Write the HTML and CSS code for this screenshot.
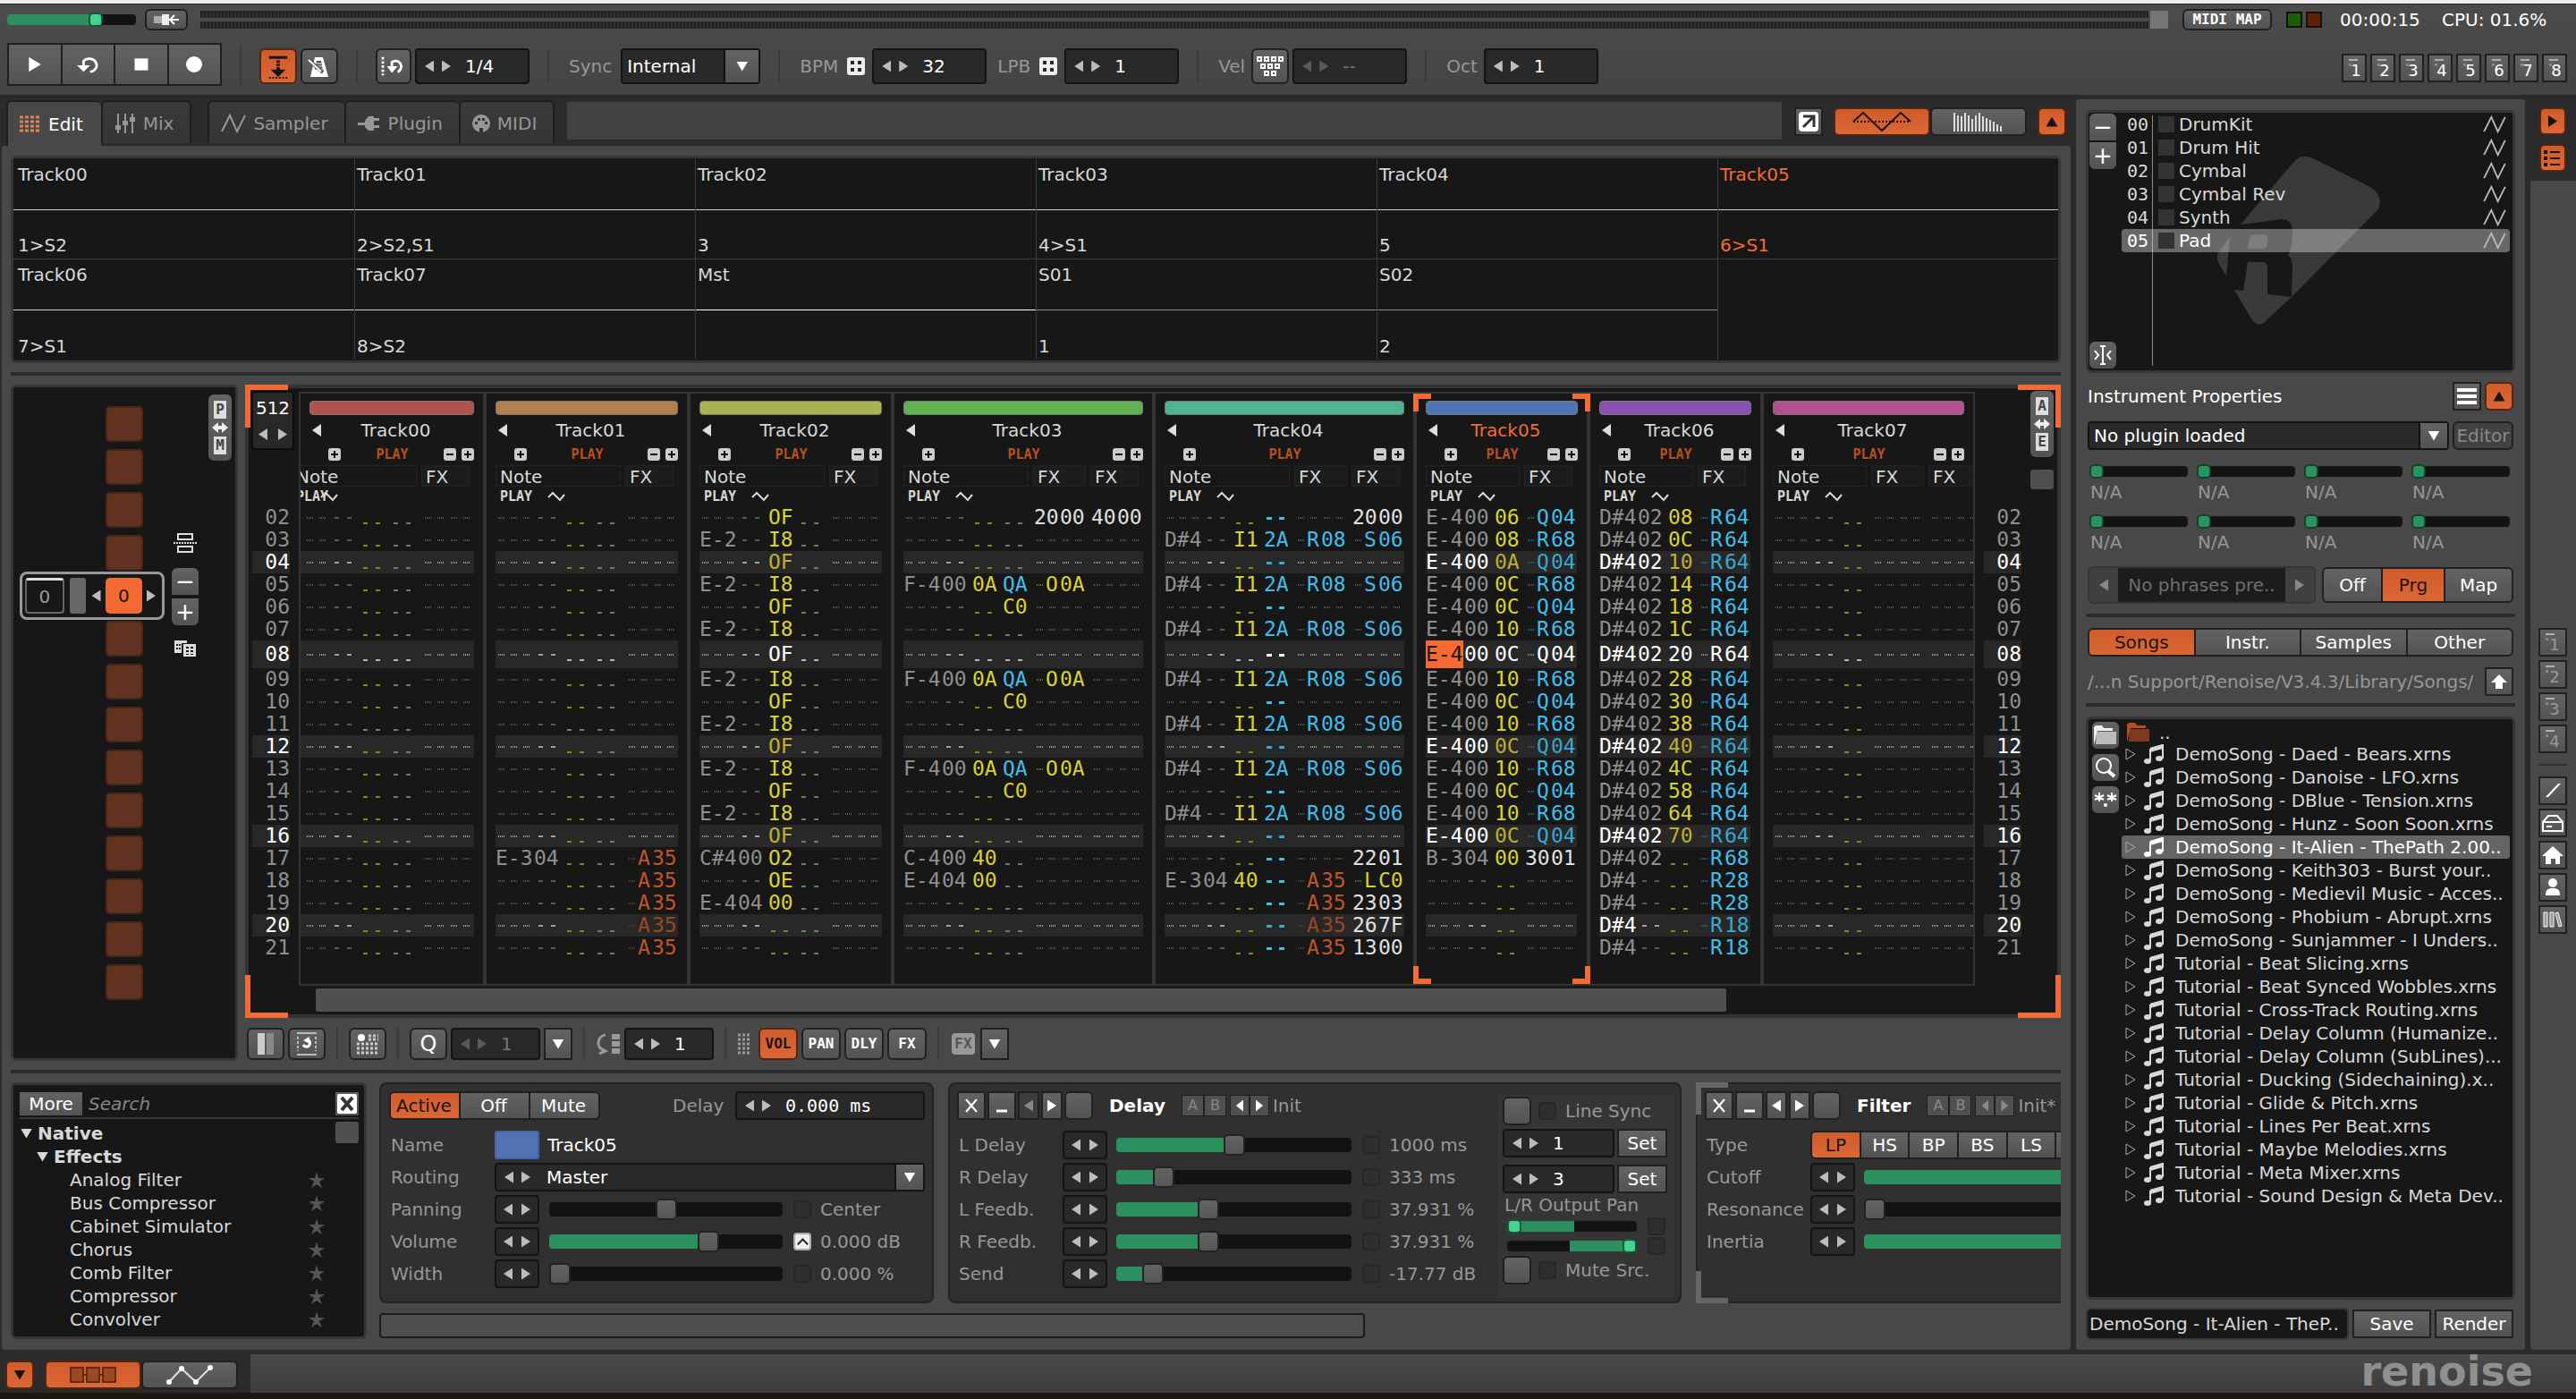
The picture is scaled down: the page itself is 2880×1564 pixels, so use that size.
FILE: index.html
```html
<!DOCTYPE html>
<html lang="en">
<head>
<meta charset="utf-8">
<title>Renoise</title>
<link rel="stylesheet" href="styles.css">
</head>
<body>
<svg class="sprite" aria-hidden="true">
  <symbol id="play" viewBox="0 0 24 24"><path d="M4 2 20 12 4 22z" fill="currentColor"/></symbol>
  <symbol id="loop" viewBox="0 0 28 24"><path d="M9 16V8a9 8 0 1 1 8 13" fill="none" stroke="currentColor" stroke-width="3"/><path d="M1 13h16l-8 8z" fill="currentColor"/></symbol>
  <symbol id="stop" viewBox="0 0 24 24"><path d="M3 4h18v16H3z" fill="currentColor"/></symbol>
  <symbol id="rec" viewBox="0 0 24 24"><circle cx="12" cy="12" r="9" fill="currentColor"/></symbol>
  <symbol id="follow" viewBox="0 0 28 32"><path d="M3 4h22v3H3zM12 9h4v3h-4zM12 13h4v3h-4zM12 17h4v4h-4zM5 20h18l-9 9z" fill="currentColor"/><path d="M3 30h22" stroke="currentColor" stroke-width="2" stroke-dasharray="2 2"/></symbol>
  <symbol id="metro" viewBox="0 0 28 28"><path d="M9 4h9l6 22H4z" fill="currentColor"/><path d="M11 8h5l2 10h-9z" fill="#555"/><path d="M11 11h6M10 14h8M10 17h8" stroke="#eee" stroke-width="1"/><path d="M3 8l15 13" stroke="#555" stroke-width="4"/><path d="M2 7l14 13" stroke="currentColor" stroke-width="2"/></symbol>
  <symbol id="patloop" viewBox="0 0 32 26"><path d="M3 2v22" stroke="currentColor" stroke-width="3" stroke-dasharray="3 2"/><path d="M14 16V8a7 7 0 1 1 7 12" fill="none" stroke="currentColor" stroke-width="3"/><path d="M8 13h13l-7 8z" fill="currentColor"/></symbol>
  <symbol id="dice" viewBox="0 0 20 20"><rect width="20" height="20" rx="3" fill="#eee"/><path d="M4 4h4v4H4zM12 4h4v4h-4zM4 12h4v4H4zM12 12h4v4h-4z" fill="#2a2a2a"/></symbol>
  <symbol id="keys" viewBox="0 0 32 24"><g fill="none" stroke="#fff" stroke-width="2"><path d="M2 2h4v4H2zM10 2h4v4h-4zM18 2h4v4h-4zM26 2h4v4h-4zM6 10h4v4H6zM14 10h4v4h-4zM22 10h4v4h-4zM10 18h4v4h-4zM18 18h4v4h-4z"/></g></symbol>
  <symbol id="grid" viewBox="0 0 24 20"><path d="M0 2h24M0 7h24M0 12h24M0 17h24" stroke="currentColor" stroke-width="3" stroke-dasharray="4 2"/></symbol>
  <symbol id="mix" viewBox="0 0 24 22"><path d="M4 0v22M12 0v22M20 0v22" stroke="currentColor" stroke-width="2"/><path d="M1 13h6v5H1zM9 8h6v5H9zM17 4h6v5h-6z" fill="currentColor"/></symbol>
  <symbol id="nwave" viewBox="0 0 28 22"><path d="M1 20 10 2l8 18L27 2" fill="none" stroke="currentColor" stroke-width="2"/></symbol>
  <symbol id="plug" viewBox="0 0 26 20"><path d="M0 9h8V7l4-5h6v16h-6l-4-4v-2H0zM18 4h6v3h-6zM18 12h6v3h-6z" fill="currentColor"/></symbol>
  <symbol id="midi" viewBox="0 0 20 20"><circle cx="10" cy="10" r="10" fill="currentColor"/><path d="M3 8h3v3H3zM6 4h3v3H6zM11 4h3v3h-3zM14 8h3v3h-3zM8 15h4v5H8z" fill="#333"/></symbol>
  <symbol id="ext" viewBox="0 0 22 22"><rect width="22" height="22" rx="4" fill="#fff"/><path d="M5 5h12v12M16 6 5 17" fill="none" stroke="#333" stroke-width="3"/></symbol>
  <symbol id="scope" viewBox="0 0 66 24"><path d="M1 12h64" stroke="currentColor" stroke-width="2" stroke-dasharray="2 2"/><path d="M1 12 12 2l21 20L54 2l11 10" fill="none" stroke="currentColor" stroke-width="2"/></symbol>
  <symbol id="spec" viewBox="0 0 56 22"><path d="M1 1v21M5 4v18M9 5v17M13 1v21M17 4v18M21 8v14M25 4v18M29 1v21M33 5v17M37 7v15M41 9v13M45 11v11M49 14v8M53 16v6" stroke="#ddd" stroke-width="2"/></symbol>
  <symbol id="sine" viewBox="0 0 20 12"><path d="M1 7 6 2l8 8 5-6" fill="none" stroke="currentColor" stroke-width="2"/></symbol>
  <symbol id="list" viewBox="0 0 20 20"><path d="M0 1h4v4H0zM0 8h4v4H0zM0 15h4v4H0zM7 2h11v2H7zM7 9h11v2H7zM7 16h11v2H7z" fill="currentColor"/></symbol>
  <symbol id="ibeam" viewBox="0 0 22 22"><path d="M8 1h6M8 21h6M11 1v20M2 6l4 5-4 5M20 6l-4 5 4 5" fill="none" stroke="#fff" stroke-width="2"/></symbol>
  <symbol id="menu" viewBox="0 0 22 20"><path d="M0 3h22M0 10h22M0 17h22" stroke="#fff" stroke-width="4"/></symbol>
  <symbol id="up" viewBox="0 0 20 18"><path d="M10 1 19 10h-5v7H6v-7H1z" fill="#fff"/></symbol>
  <symbol id="folder" viewBox="0 0 26 22"><path d="M0 22V2l2-2h7l2 3h10v3H4z" fill="var(--back)"/><path d="M3 7h22v14H2z" fill="var(--front)"/></symbol>
  <symbol id="lens" viewBox="0 0 24 24"><circle cx="10" cy="10" r="8" fill="none" stroke="#fff" stroke-width="2"/><path d="M15 16l7 6" stroke="#fff" stroke-width="4"/></symbol>
  <symbol id="stars" viewBox="0 0 26 18"><path d="M6 1v10M1 4l10 5M11 4 1 9M20 1v10M15 4l10 5M25 4l-10 5" stroke="#fff" stroke-width="2"/><circle cx="13" cy="15" r="2" fill="#fff"/></symbol>
  <symbol id="note" viewBox="0 0 22 22"><path d="M7 5 21 1v15M7 18V5" fill="none" stroke="currentColor" stroke-width="2"/><path d="M7 4 21 0v5L7 9z" fill="currentColor"/><ellipse cx="4" cy="19" rx="4" ry="3" fill="currentColor"/><ellipse cx="17" cy="16" rx="4" ry="3" fill="currentColor"/></symbol>
  <symbol id="caret" viewBox="0 0 12 14"><path d="M1 1 11 7 1 13z" fill="none" stroke="#aaa" stroke-width="1"/></symbol>
  <symbol id="pen" viewBox="0 0 20 18"><path d="M2 16 16 1h3L5 16z" fill="#fff"/></symbol>
  <symbol id="drive" viewBox="0 0 24 20"><path d="M1 9 7 2h10l6 7M1 9h22v10H1zM5 14h6" fill="none" stroke="#fff" stroke-width="2"/></symbol>
  <symbol id="home" viewBox="0 0 24 20"><path d="M12 0 24 11h-4v9h-5v-6h-5v6H4v-9H0z" fill="#fff"/></symbol>
  <symbol id="user" viewBox="0 0 18 20"><circle cx="9" cy="5" r="5" fill="#fff"/><path d="M1 19c0-6 2-8 8-8s8 2 8 8z" fill="#fff"/></symbol>
  <symbol id="books" viewBox="0 0 22 18"><path d="M1 1h4v16H1zM8 1h4v16H8zM14 2l3-1 4 15-3 1z" fill="#999" stroke="#fff" stroke-width="1"/></symbol>
  <symbol id="xbox" viewBox="0 0 22 22"><rect width="22" height="22" rx="2" fill="#fff"/><path d="M5 4l12 14M17 4 5 18" stroke="#333" stroke-width="4"/></symbol>
  <symbol id="star" viewBox="0 0 18 18"><path d="M9 0l2 7h7l-6 4 3 7-6-4-6 4 3-7-6-4h7z" fill="currentColor"/></symbol>
  <symbol id="x" viewBox="0 0 16 16"><path d="M2 1l12 14M14 1 2 15" stroke="#fff" stroke-width="2"/></symbol>
  <symbol id="min" viewBox="0 0 16 16"><path d="M2 14h12" stroke="#fff" stroke-width="3"/></symbol>
  <symbol id="plus" viewBox="0 0 14 14"><rect width="14" height="14" rx="3" fill="#ccc"/><path d="M3 7h8M7 3v8" stroke="#111" stroke-width="2"/></symbol>
  <symbol id="minus" viewBox="0 0 14 14"><rect width="14" height="14" rx="3" fill="#ccc"/><path d="M3 7h8" stroke="#111" stroke-width="2"/></symbol>
  <symbol id="prelisten" viewBox="0 0 30 14"><path d="M1 3h12v8H1z" fill="#aaa"/><path d="M10 1h8v12h-8z" fill="#eee"/><path d="M29 7h-9M24 2l-5 5 5 5" fill="none" stroke="#fff" stroke-width="2"/></symbol>
  <symbol id="split" viewBox="0 0 26 22"><path d="M5 1h16v6H5zM5 15h16v6H5z" fill="none" stroke="#ddd" stroke-width="2"/><path d="M0 11h26" stroke="#ddd" stroke-width="2" stroke-dasharray="2 1"/></symbol>
  <symbol id="clone" viewBox="0 0 24 18"><path d="M0 0h14v3H0zM0 0h8v14H0zM10 4h14v14H10z" fill="#ddd"/><path d="M2 4h2v2H2zM5 4h2v2H5zM2 8h2v2H2zM5 8h2v2H5zM13 7h3v2h-3zM18 7h3v2h-3zM13 11h3v2h-3zM18 11h3v2h-3zM13 15h3v1h-3zM18 15h3v1h-3z" fill="#171717"/></symbol>
  <symbol id="swap" viewBox="0 0 18 12"><path d="M0 6l7-6v4h4V0l7 6-7 6V8H7v4z" fill="#eee"/></symbol>
  <symbol id="cols" viewBox="0 0 18 24"><path d="M0 0h8v24H0z" fill="#ccc"/><path d="M10 0h8v24h-8z" fill="#888"/></symbol>
  <symbol id="cycle" viewBox="0 0 24 26"><path d="M1 1h22M1 25h22" stroke="#bbb" stroke-width="2"/><path d="M2 5v16M22 5v16" stroke="#bbb" stroke-width="2" stroke-dasharray="3 2"/><path d="M8 14a4 4 0 1 0 6-5" fill="none" stroke="#fff" stroke-width="3"/><path d="M8 9l7-4v8z" fill="#fff"/></symbol>
  <symbol id="dots" viewBox="0 0 24 24"><path d="M0 12h24M0 17h24M0 22h24M13 3h11M13 7h11" stroke="#ccc" stroke-width="3" stroke-dasharray="3 2"/><circle cx="5" cy="5" r="4" fill="#fff"/></symbol>
  <symbol id="step" viewBox="0 0 28 24"><path d="M11 2a9 9 0 0 0-3 17M4 16l7 4-7 3" fill="none" stroke="#999" stroke-width="3"/><path d="M18 1h9v6h-9zM18 9h9v6h-9zM18 17h9v6h-9z" fill="#999"/></symbol>
  <symbol id="dgrid" viewBox="0 0 16 24"><path d="M1 2h16M1 7h16M1 12h16M1 17h16M1 22h16" stroke="#999" stroke-width="3" stroke-dasharray="3 2"/></symbol>
  <symbol id="links" viewBox="0 0 52 18"><path d="M1 1h14v16H1zM19 1h14v16H19zM37 1h14v16H37z" fill="#9b4824" stroke="#662a12" stroke-width="2"/><path d="M15 9h4M33 9h4" stroke="#662a12" stroke-width="2"/></symbol>
  <symbol id="auto" viewBox="0 0 54 24"><path d="M4 20 18 5l16 15L50 4" fill="none" stroke="#ddd" stroke-width="2"/><circle cx="4" cy="20" r="3" fill="#fff"/><circle cx="18" cy="5" r="3" fill="#fff"/><circle cx="34" cy="20" r="3" fill="#fff"/><circle cx="50" cy="4" r="3" fill="#fff"/></symbol>
</svg>

<header class="top">
  <div class="status">
    <input class="range bright master" type="range" value="71" aria-label="Main volume" style="--v:71%">
    <button class="btn pre" aria-label="Pre volume"><svg width="30" height="14"><use href="#prelisten"/></svg></button>
    <div class="meters"><i></i><i></i></div>
    <span class="clip"></span>
    <button class="btn midimap pix">MIDI MAP</button>
    <span class="led green"></span><span class="led red"></span>
    <span class="time">00:00:15</span><span class="cpu">CPU: 01.6%</span>
  </div>
  <div class="transport">
    <div class="group big">
      <button aria-label="Play"><svg width="20" height="20"><use href="#play"/></svg></button>
      <button aria-label="Continue"><svg width="28" height="22"><use href="#loop"/></svg></button>
      <button aria-label="Stop"><svg width="22" height="20"><use href="#stop"/></svg></button>
      <button aria-label="Record"><svg width="24" height="24"><use href="#rec"/></svg></button>
    </div>
    <i class="sep"></i>
    <button class="btn sq on" aria-label="Follow"><svg width="26" height="32"><use href="#follow"/></svg></button>
    <button class="btn sq" aria-label="Metronome"><svg width="28" height="28"><use href="#metro"/></svg></button>
    <i class="sep"></i>
    <button class="btn sq blk" aria-label="Block loop"><svg width="32" height="24"><use href="#patloop"/></svg></button>
    <num-box label="Block size" value="1/4"></num-box>
    <i class="sep"></i>
    <label for="sync">Sync</label>
    <span class="pick sync"><select id="sync"><option>Internal</option></select><i></i></span>
    <i class="sep"></i>
    <span class="lab">BPM</span><svg width="20" height="20"><use href="#dice"/></svg>
    <num-box class="after" label="BPM" value="32"></num-box>
    <span class="lab lpb">LPB</span><svg width="20" height="20"><use href="#dice"/></svg>
    <num-box class="after" label="LPB" value="1"></num-box>
    <i class="sep"></i>
    <span class="lab tight">Vel</span>
    <button class="btn sq" aria-label="Keyboard velocity"><svg width="32" height="24"><use href="#keys"/></svg></button>
    <num-box class="dim" label="Velocity" value="--"></num-box>
    <i class="sep"></i>
    <span class="lab tight">Oct</span>
    <num-box label="Octave" value="1"></num-box>
    <div class="presets" id="presets"></div>
  </div>
</header>

<main>
  <section class="center">
    <nav class="tabs">
      <button class="tab cur"><svg width="24" height="20"><use href="#grid"/></svg>Edit</button>
      <button class="tab"><svg width="24" height="22"><use href="#mix"/></svg>Mix</button>
      <button class="tab first"><svg width="28" height="22"><use href="#nwave"/></svg>Sampler</button>
      <button class="tab"><svg width="26" height="20"><use href="#plug"/></svg>Plugin</button>
      <button class="tab"><svg width="20" height="20"><use href="#midi"/></svg>MIDI</button>
      <span class="filler"></span>
      <button class="btn s32 flat" aria-label="Detach"><svg width="22" height="22"><use href="#ext"/></svg></button>
      <span class="pair">
        <button class="btn on" aria-label="Scopes"><svg width="66" height="24"><use href="#scope"/></svg></button>
        <button class="btn" aria-label="Spectrum"><svg width="56" height="22"><use href="#spec"/></svg></button>
      </span>
      <button class="btn s32 on" aria-label="Collapse"><i class="tri-u"></i></button>
    </nav>

    <div class="panel">
      <div class="scopes" id="scopes"></div>
      <hr>
      <div class="editor">
        <aside class="sequencer">
          <div class="slots" id="slots"></div>
          <div class="seqtools">
            <svg width="26" height="22"><use href="#split"/></svg>
            <div class="stack"><button class="btn" aria-label="Remove">−</button><button class="btn" aria-label="Add">+</button></div>
            <svg width="24" height="18"><use href="#clone"/></svg>
          </div>
          <button class="btn vert"><b>P</b><svg width="18" height="12"><use href="#swap"/></svg><b>M</b></button>
        </aside>
        <div class="right">
          <div class="pattern">
            <div class="lines left">
              <div class="plen"><span>512</span><span class="arr"><button class="tl" aria-label="Shorter"></button><button class="tr" aria-label="Longer"></button></span></div>
              <ol class="nums"></ol>
            </div>
            <div class="tracks" id="tracks"></div>
            <div class="lines">
              <ol class="nums"></ol>
            </div>
            <div class="vscroll">
              <button class="btn vert"><b>A</b><svg width="18" height="12"><use href="#swap"/></svg><b>E</b></button>
              <i></i>
            </div>
            <div class="hscroll"><i></i></div>
            <i class="corner c1"></i><i class="corner c2"></i><i class="corner c3"></i><i class="corner c4"></i>
          </div>
          <div class="tools">
            <button class="btn sq" aria-label="Columns"><svg width="18" height="24"><use href="#cols"/></svg></button>
            <button class="btn sq" aria-label="Wrap"><svg width="24" height="26"><use href="#cycle"/></svg></button>
            <i class="sep"></i>
            <button class="btn sq" aria-label="Single track"><svg width="24" height="24"><use href="#dots"/></svg></button>
            <i class="sep"></i>
            <button class="btn sq quant">Q</button>
            <num-box class="short dim" label="Quantize" value="1"></num-box>
            <button class="btn s32 drop" aria-label="Quantize menu"><i class="tri-d"></i></button>
            <i class="sep"></i>
            <svg width="28" height="24"><use href="#step"/></svg>
            <num-box class="short" label="Edit step" value="1"></num-box>
            <i class="sep"></i>
            <svg class="dg" width="16" height="24"><use href="#dgrid"/></svg>
            <button class="btn col on pix">VOL</button><button class="btn col pix">PAN</button><button class="btn col pix">DLY</button><button class="btn col pix">FX</button>
            <i class="sep"></i>
            <span class="fxchip pix">FX</span>
            <button class="btn s32 drop" aria-label="Effects menu"><i class="tri-d"></i></button>
          </div>
        </div>
      </div>
      <hr>
      <div class="dsp">
        <aside class="tree">
          <div class="find"><button class="btn">More</button><input type="text" placeholder="Search" aria-label="Search"><button class="btn clear" aria-label="Clear"><svg width="22" height="22"><use href="#xbox"/></svg></button></div>
          <div class="treebody"><ul id="tree"></ul><i class="thumb"></i></div>
        </aside>
        <div class="chainwrap">
          <div class="chain" id="devices"></div>
          <div class="chainbar"></div>
        </div>
      </div>
    </div>
  </section>

  <section class="side">
    <div class="instr">
      <svg class="mark" viewBox="2480 174 184 190" width="184" height="190" aria-hidden="true">
        <path fill="#3a3a3a" d="M2507 251 2564 184Q2575 169 2590 178L2652 209Q2667 219 2661 234L2564 332 2565 297Q2565 289 2560 285 2565 278 2565 257 2564 245 2552 245L2517 250z"/>
        <path fill="#3a3a3a" d="M2538 356Q2529 368 2520 358L2500 324 2510 325 2515 293 2534 293Q2537 295 2537 299V329L2564 332z"/>
        <path fill="#3a3a3a" d="M2518 263 2532 262Q2538 262 2537 268V274Q2536 278 2532 278L2515 278zM2495 265 2491 308Q2476 287 2483 281z"/>
      </svg>
      <div class="ibtns">
        <div class="stack"><button class="btn" aria-label="Delete">−</button><button class="btn" aria-label="Insert">+</button></div>
        <button class="btn move" aria-label="Resize"><svg width="22" height="22"><use href="#ibeam"/></svg></button>
      </div>
      <ol id="instruments"></ol>
    </div>
    <div class="row head"><h2>Instrument Properties</h2><button class="btn s32 flat" aria-label="Menu"><svg width="22" height="20"><use href="#menu"/></svg></button><button class="btn s32 on" aria-label="Collapse"><i class="tri-u"></i></button></div>
    <div class="row plug"><span class="pick"><select aria-label="Plugin"><option>No plugin loaded</option></select><i></i></span><button class="btn editorbtn" disabled>Editor</button></div>
    <div class="macros" id="macros"></div>
    <div class="row phr">
      <div class="phrase"><button aria-label="Previous"><i class="tl"></i></button><span>No phrases pre..</span><button aria-label="Next"><i class="tr"></i></button></div>
      <div class="seg modes"><button>Off</button><button class="on">Prg</button><button>Map</button></div>
    </div>
    <hr>
    <div class="seg cats"><button class="on">Songs</button><button>Instr.</button><button>Samples</button><button>Other</button></div>
    <div class="row path"><span>/...n Support/Renoise/V3.4.3/Library/Songs/</span><button class="btn s32 flat" aria-label="Up"><svg width="20" height="18"><use href="#up"/></svg></button></div>
    <hr>
    <div class="browser">
      <div class="bbtns">
        <button class="btn" aria-label="Folders"><svg class="fw" width="26" height="22"><use href="#folder"/></svg></button>
        <button class="btn" aria-label="Search"><svg width="24" height="24"><use href="#lens"/></svg></button>
        <button class="btn" aria-label="Filter"><svg width="26" height="18"><use href="#stars"/></svg></button>
      </div>
      <ul id="songs"></ul>
    </div>
    <div class="row save"><input type="text" aria-label="File name" value="DemoSong - It-Alien - TheP.."><button class="btn flat">Save</button><button class="btn flat">Render</button></div>
  </section>

  <aside class="strip">
    <div class="striptop">
      <button class="btn on" aria-label="Expand"><i class="tr"></i></button>
      <button class="btn on" aria-label="List"><svg width="20" height="20"><use href="#list"/></svg></button>
    </div>
    <div class="stripbody">
      <div class="presets dim" id="slots4"></div>
      <i class="line"></i>
      <button class="btn s32 flat" aria-label="Root"><svg width="20" height="18"><use href="#pen"/></svg></button>
      <button class="btn s32 flat" aria-label="Drive"><svg width="24" height="20"><use href="#drive"/></svg></button>
      <button class="btn s32 flat" aria-label="Home"><svg width="24" height="20"><use href="#home"/></svg></button>
      <button class="btn s32 flat" aria-label="User"><svg width="18" height="20"><use href="#user"/></svg></button>
      <button class="btn s32 flat" aria-label="Library"><svg width="22" height="18"><use href="#books"/></svg></button>
    </div>
  </aside>
</main>

<footer>
  <div class="fbtns">
    <button class="btn on s32" aria-label="Collapse"><i class="tri-d"></i></button>
    <span class="pair">
      <button class="btn on" aria-label="Track DSPs"><svg width="52" height="18"><use href="#links"/></svg></button>
      <button class="btn" aria-label="Automation"><svg width="54" height="24"><use href="#auto"/></svg></button>
    </span>
  </div>
  <div class="fbar"><span class="brand">renoise</span></div>
</footer>
<script src="script.js"></script>
</body>
</html>
```
FILE: script.js
```js
const $ = (s) => document.querySelector(s);
const ico = (n, w, h, c = '') => `<svg class="${c}" width="${w}" height="${h}" aria-hidden="true"><use href="#${n}"/></svg>`;

const arrows = '<button class="tl" aria-label="Less"></button><button class="tr" aria-label="More"></button>';
const num = (label, value) => arrows + (value ? `<input type="text" aria-label="${label}" value="${value}">` : '');

customElements.define('num-box', class extends HTMLElement {
  connectedCallback() {
    this.innerHTML = num(this.getAttribute('label'), this.getAttribute('value'));
  }
});

/* numbered preset buttons */
$('#presets').innerHTML = [1, 2, 3, 4, 5, 6, 7, 8].map((n) => `<button class="btn">${n}</button>`).join('');
$('#slots4').innerHTML = [1, 2, 3, 4].map((n) => `<button class="btn">${n}</button>`).join('');

/* track scopes */
$('#scopes').innerHTML = [
  ['Track00', '1&gt;S2'], ['Track01', '2&gt;S2,S1'], ['Track02', '3'], ['Track03', '4&gt;S1'], ['Track04', '5'], ['Track05', '6&gt;S1', 'cur'],
  ['Track06', '7&gt;S1'], ['Track07', '8&gt;S2'], ['Mst', '&nbsp;', 'mst'], ['S01', '1', 'send'], ['S02', '2', 'send'], ['', '', 'none'],
].map(([n, r, c = '']) => `<div class="${c}"><span>${n}</span><span>${r}</span></div>`).join('');

/* pattern sequence */
$('#slots').innerHTML = Array.from({ length: 14 }, (_, i) => i === 4
  ? '<div class="now"><span class="pos">0</span><i class="mat"></i><button class="tl" aria-label="Previous"></button><b>0</b><button class="tr" aria-label="Next"></button></div>'
  : '<i class="slot"></i>').join('');

/* pattern data: note instrument volume panning fx */
const rows = Array.from({ length: 20 }, (_, i) => i + 2);
const pad = (n) => String(n).padStart(2, '0');
const kind = (n) => (n === 8 ? 'here' : n % 4 === 0 ? 'beat' : '');
document.querySelectorAll('.nums').forEach((o) => {
  o.innerHTML = rows.map((n) => `<li class="${kind(n)}">${pad(n)}</li>`).join('');
});

const vol5 = '06 08 0A 0C 0C 10 0C 10 0C 10 0C 10 0C 10 0C'.split(' ');
const vol6 = '08 0C 10 14 18 1C 20 28 30 38 40 4C 58 64 70'.split(' ');
const E4 = '.. .. ....';
const tracks = [
  { c: '#b35050', g: 'nivpf', w: 184, f: () => `... .. ${E4}` },
  { c: '#b38050', g: 'nivpf', w: 204, f: (n) => (n === 17 ? 'E-3 04 .. .. .A35' : n > 17 ? '... .. .. .. .A35' : `... .. ${E4}`) },
  { c: '#a8b350', g: 'nivpf', w: 204, f: (n) => ({ 17: 'C#4 00 O2 .. ....', 18: '... .. OE .. ....', 19: 'E-4 04 00 .. ....' }[n] || (n > 16 ? `... .. ${E4}` : n % 2 ? 'E-2 .. I8 .. ....' : '... .. OF .. ....')) },
  { c: '#60b350', g: 'nivpff', w: 268, f: (n) => ({ 2: '... .. .. .. 2000 4000', 17: 'C-4 00 40 .. .... ....', 18: 'E-4 04 00 .. .... ....' }[n] || (n < 16 && n % 4 === 1 && n > 4 ? 'F-4 00 0A QA .O0A ....' : n < 16 && n % 4 === 2 ? '... .. .. C0 .... ....' : `... .. ${E4} ....`)) },
  { c: '#50b393', g: 'nivpff', w: 268, f: (n) => ({ 2: '... .. .. -- .... 2000', 17: '... .. .. -- .... 2201', 18: 'E-3 04 40 -- .A35 .LC0', 19: '... .. .. -- .A35 2303', 20: '... .. .. -- .A35 267F', 21: '... .. .. -- .A35 1300' }[n] || (n % 2 ? 'D#4 .. I1 2A .R08 .S06' : '... .. .. -- .... ....')) },
  { c: '#5073b3', g: 'nivf', w: 170, sel: 1, f: (n) => (n < 17 ? `E-4 00 ${vol5[n - 2]} ${n % 2 ? '.R68' : '.Q04'}` : n === 17 ? 'B-3 04 00 3001' : '... .. .. ....') },
  { c: '#8850b3', g: 'nivf', w: 170, f: (n) => (n < 17 ? `D#4 02 ${vol6[n - 2]} .R64` : n === 17 ? 'D#4 02 .. .R68' : `D#4 .. .. ${n < 20 ? '.R28' : '.R18'}`) },
  { c: '#b35090', g: 'nivff', w: 214, f: () => '... .. .. .... ....' },
];
const dot = '<i class="d"></i>';
function cell(k, t) {
  const empty = /^\.+$/.test(t);
  if (k === 'n') return empty ? `<td class="n">${dot.repeat(3)}</td>` : `<td class="n">${t}</td>`;
  if (k === 'i') return `<td class="i">${empty ? '<i class="m"></i><i class="m"></i>' : t}</td>`;
  if (k === 'v' || k === 'p') {
    if (empty) return `<td class="${k} low"><i class="u"></i><i class="u"></i></td>`;
    if (t === '--') return '<td class="p blue"><i class="l"></i><i class="l"></i></td>';
    return `<td class="${k} ${/QA|2A/.test(t) ? 'blue' : 'yellow'}">${t}</td>`;
  }
  if (empty) return `<td class="f"><span>${dot}${dot}</span>${dot}${dot}</td>`;
  const c = { A: 'orange', R: 'blue', Q: 'blue', S: 'blue', O: 'yellow', L: 'yellow' }[t[1]] || 'lite';
  return `<td class="f set ${c}"><span>${t[0] === '.' ? dot + t[1] : t.slice(0, 2)}</span>${t.slice(2)}</td>`;
}
const colW = { n: 43, i: 34, v: 34, p: 35, f: 64 };
$('#tracks').innerHTML = tracks.map((t, i) => {
  const g = [...t.g];
  const fx = g.filter((k) => k === 'f').length;
  const body = rows.map((n) => {
    const parts = t.f(n).split(' ');
    return `<tr class="${kind(n)}">${g.map((k, j) => cell(k, parts[j])).join('')}</tr>`;
  }).join('');
  const cols = g.map((k, j) => `<col style="width:${j === g.length - 1 ? 58 : colW[k]}px">`).join('');
  return `<section class="track t${i}${t.sel ? ' sel' : ''}">
    <div class="thead" style="width:${t.w}px"><i class="bar" style="background:${t.c}"></i>
      <div class="tname"><button class="tl" aria-label="Collapse"></button><span>Track${pad(i)}</span></div>
      <div class="tplay">${ico('plus', 14, 14)}<span class="pix">PLAY</span>${ico('minus', 14, 14)}${ico('plus', 14, 14)}</div></div>
    <div class="cols"><span class="${g.includes('p') ? 'wide' : ''}">Note</span>${'<span class="fx">FX</span>'.repeat(fx)}</div>
    <div class="cplay"><span class="pix">PLAY</span>${ico('sine', 20, 12)}</div>
    <table><colgroup>${cols}</colgroup><tbody>${body}</tbody></table>
    ${t.sel ? '<i class="k k1"></i><i class="k k2"></i><i class="k k3"></i><i class="k k4"></i>' : ''}
  </section>`;
}).join('');
$('.sel .here .n').classList.add('cursor');

/* effect tree */
$('#tree').innerHTML = '<li class="l0"><i class="tri-d"></i>Native</li><li class="l1"><i class="tri-d"></i>Effects</li>'
  + ['Analog Filter', 'Bus Compressor', 'Cabinet Simulator', 'Chorus', 'Comb Filter', 'Compressor', 'Convolver']
    .map((n) => `<li>${n}${ico('star', 18, 18)}</li>`).join('');

/* devices */
let uid = 0;
function param(name, v, text, cls = '', led = '') {
  const id = `p${uid += 1}`;
  return `<div class="param ${cls}"><label for="${id}">${name}</label><div class="num arrows">${arrows}</div>
    <input class="range" id="${id}" type="range" value="${v}" style="--v:${v}%">
    ${text ? `<i class="lamp ${led}"></i><span>${text}</span>` : ''}</div>`;
}
const devHead = (name, preset, first) => `<div class="dhead">
  <button class="btn s32 flat" aria-label="Remove">${ico('x', 16, 16)}</button><button class="btn s32 flat" aria-label="Minimize">${ico('min', 16, 16)}</button>
  <button class="btn w24 flat ${first ? 'off' : ''}" aria-label="Move left"><i class="tl"></i></button><button class="btn w24 flat" aria-label="Move right"><i class="tr"></i></button>
  <button class="btn s32" aria-label="External"></button><b>${name}</b>
  <span class="ab"><button>A</button><button>B</button></span><span class="ab nav ${first ? '' : 'off'}"><button aria-label="Previous preset"><i class="tl"></i></button><button aria-label="Next preset"><i class="tr"></i></button></span>
  <span class="preset">${preset}</span></div>`;

$('#devices').innerHTML = `
<section class="device mixer">
  <div class="param"><div class="seg"><button class="on">Active</button><button>Off</button><button>Mute</button></div>
    <label class="dl" for="tdelay">Delay</label><div class="num">${arrows}<input id="tdelay" class="mono" type="text" value="0.000 ms"></div></div>
  <div class="param"><label for="tname">Name</label><i class="swatch"></i><input class="plain" id="tname" type="text" value="Track05"></div>
  <div class="param"><label for="route">Routing</label><div class="num route">${arrows}<span class="pick"><select id="route"><option>Master</option></select><i></i></span></div></div>
  ${param('Panning', 50, 'Center', 'nofill')}
  ${param('Volume', 70, '0.000 dB', '', 'lit')}
  ${param('Width', 0, '0.000 %')}
</section>
<section class="device delay"><div class="dmain">
  ${devHead('Delay', 'Init', true)}
  ${param('L Delay', 50, '1000 ms')}${param('R Delay', 17, '333 ms')}${param('L Feedb.', 38, '37.931 %')}${param('R Feedb.', 38, '37.931 %')}${param('Send', 12, '-17.77 dB')}
  </div>
  <div class="dside">
    <div class="drow"><button class="btn s32" aria-label="Line sync"></button><i class="lamp"></i><span>Line Sync</span></div>
    <div class="drow"><div class="num">${num('Left lines', '1')}</div><button class="btn flat set">Set</button></div>
    <div class="drow gap"><div class="num">${num('Right lines', '3')}</div><button class="btn flat set">Set</button></div>
    <span class="cap">L/R Output Pan</span>
    <div class="prow"><input class="range bright small pl" type="range" value="0" aria-label="Left pan"><i class="lamp"></i></div>
    <div class="prow"><input class="range bright small pr" type="range" value="100" aria-label="Right pan"><i class="lamp"></i></div>
    <div class="drow last"><button class="btn s32" aria-label="Mute source"></button><i class="lamp"></i><span>Mute Src.</span></div>
  </div>
</section>
<section class="device filter"><div class="dmain">
  ${devHead('Filter', 'Init*', false)}
  <div class="param"><label>Type</label><div class="seg types"><button class="on">LP</button><button>HS</button><button>BP</button><button>BS</button><button>LS</button><button aria-label="Notch"></button></div></div>
  ${param('Cutoff', 100, '', 'full')}${param('Resonance', 0, '', 'full')}${param('Inertia', 100, '', 'full')}
  </div><i class="g g1"></i><i class="g g2"></i>
</section>`;

/* instrument list */
$('#instruments').innerHTML = ['DrumKit', 'Drum Hit', 'Cymbal', 'Cymbal Rev', 'Synth', 'Pad'].map((n, i) =>
  `<li class="${i === 5 ? 'cur' : ''}"><span class="no">${pad(i)}</span><i></i><span>${n}</span>${ico('nwave', 26, 20)}</li>`).join('');
$('#macros').innerHTML = Array.from({ length: 8 }, (_, i) =>
  `<div><input class="range small" id="m${i}" type="range" value="0" style="--v:0%"><label for="m${i}">N/A</label></div>`).join('');

/* song browser */
$('#songs').innerHTML = `<li class="parent">${ico('folder', 26, 22, 'fo')}<span>..</span></li>` + [
  'DemoSong - Daed - Bears.xrns', 'DemoSong - Danoise - LFO.xrns', 'DemoSong - DBlue - Tension.xrns', 'DemoSong - Hunz - Soon Soon.xrns',
  'DemoSong - It-Alien - ThePath 2.00..', 'DemoSong - Keith303 - Burst your..', 'DemoSong - Medievil Music - Acces..', 'DemoSong - Phobium - Abrupt.xrns',
  'DemoSong - Sunjammer - I Unders..', 'Tutorial - Beat Slicing.xrns', 'Tutorial - Beat Synced Wobbles.xrns', 'Tutorial - Cross-Track Routing.xrns',
  'Tutorial - Delay Column (Humanize..', 'Tutorial - Delay Column (SubLines)...', 'Tutorial - Ducking (Sidechaining).x..', 'Tutorial - Glide &amp; Pitch.xrns',
  'Tutorial - Lines Per Beat.xrns', 'Tutorial - Maybe Melodies.xrns', 'Tutorial - Meta Mixer.xrns', 'Tutorial - Sound Design &amp; Meta Dev..',
].map((n, i) => `<li class="${i === 4 ? 'cur' : ''}">${ico('caret', 12, 14)}${ico('note', 22, 22)}<span>${n}</span></li>`).join('');
```
FILE: styles.css
```css
:root {
  --bg: #2b2b2b;
  --panel: #484848;
  --well: #171717;
  --edge: #363636;
  --text: #d8d8d8;
  --muted: #979797;
  --accent: #f36b32;
  --accent-btn: linear-gradient(#d05c2b, #dc6736);
  --btn: linear-gradient(#636363, #535353);
}
* { box-sizing: border-box; }
body {
  margin: 0;
  min-height: 100vh;
  display: flex;
  flex-direction: column;
  background: var(--bg);
  border-top: 4px solid #ececec;
  color: var(--text);
  font: 20px/26px "DejaVu Sans", sans-serif;
  overflow-x: hidden;
}
.sprite { position: absolute; width: 0; height: 0; }
svg { flex: none; display: block; overflow: visible; }
i { font-style: normal; flex: none; display: block; }
button, input, select {
  font: inherit;
  color: inherit;
  margin: 0;
  padding: 0;
  border: 0;
  background: none;
  border-radius: 0;
  outline: 0;
}
button { display: flex; align-items: center; justify-content: center; flex: none; }
input, select { min-width: 0; }
ul, ol { list-style: none; margin: 0; padding: 0; }
h2 { font: inherit; margin: 0; flex: 1; color: #fff; }
hr { width: 100%; height: 4px; margin: 0; border: 0; background: var(--bg); flex: none; }
label, .lab { color: var(--muted); }
.pix { font: bold 16px/16px "DejaVu Sans Mono", monospace; }

.btn { background: var(--btn); border: 2px solid #202020; border-radius: 6px; color: #fff; height: 32px; }
.btn.on { background: var(--accent-btn); border-color: #54260f; color: #1c1410; }
.flat { border-radius: 1px; }
.s32 { width: 32px; }
.w24 { width: 24px; }
.btn.off { background: #3c3c3c; color: #888; }

.tl, .tr { width: 10px; height: 13px; background: #bcbcbc; flex: none; }
.tl { clip-path: polygon(100% 0, 100% 100%, 0 50%); }
.tr { clip-path: polygon(0 0, 100% 50%, 0 100%); }
.tri-u, .tri-d { width: 13px; height: 11px; background: currentColor; }
.tri-u { clip-path: polygon(50% 0, 100% 100%, 0 100%); }
.tri-d { clip-path: polygon(0 0, 100% 0, 50% 100%); }

.num, num-box {
  display: flex;
  align-items: center;
  flex: none;
  min-width: 0;
  height: 32px;
  padding-left: 9px;
  background: #292929;
  border: 2px solid #131313;
  border-radius: 4px;
  color: #fff;
}
.num .tr, num-box .tr { margin-left: 9px; }
.num input, num-box input { flex: 1; width: 0; margin-left: 16px; height: 100%; }
num-box { width: 128px; height: 40px; }
num-box.short { width: 100px; height: 36px; }
num-box.dim { color: #777; }
num-box.dim .tl, num-box.dim .tr { background: #5a5a5a; }
.num .mono { font-family: "DejaVu Sans Mono", monospace; }

.pick { display: grid; grid-template-columns: 1fr 32px; flex: 1; height: 32px; background: #292929; border: 2px solid #131313; border-radius: 4px; color: #fff; }
.pick select { appearance: none; grid-area: 1 / 1 / 2 / 3; padding-left: 5px; width: 100%; }
.pick i { grid-area: 1 / 2; background: var(--btn); border-left: 2px solid #131313; pointer-events: none; display: flex; align-items: center; justify-content: center; }
.pick i::after { content: ""; width: 13px; height: 11px; background: #fff; clip-path: polygon(0 0, 100% 0, 50% 100%); }

.range { --h: 16px; --t: 24px; appearance: none; flex: 1; height: 24px; background: transparent; }
.range::-webkit-slider-runnable-track { height: var(--h); border-radius: 4px; background: linear-gradient(90deg, #2b905e var(--v), #131313 var(--v)); }
.range::-webkit-slider-thumb { appearance: none; width: var(--t); height: 24px; margin-top: -4px; border: 2px solid #222; border-radius: 5px; background: linear-gradient(#636363, #565656); }
.nofill .range::-webkit-slider-runnable-track { background: #131313; }
.small { --h: 12px; --t: 16px; height: 16px; }
.small::-webkit-slider-thumb { height: 16px; margin-top: -2px; background: #2b9562; border-color: #17402d; }
.bright { --h: 12px; --t: 16px; height: 16px; }
.bright::-webkit-slider-thumb { height: 16px; margin-top: -2px; background: #40d48c; border-color: #1c5238; }
.pl::-webkit-slider-runnable-track { background: linear-gradient(90deg, #2b905e 52%, #131313 52%); }
.pr::-webkit-slider-runnable-track { background: linear-gradient(90deg, #131313 48%, #2b905e 48%); }

.seg { display: flex; flex: none; height: 32px; border: 2px solid #202020; border-radius: 6px; overflow: hidden; background: #202020; gap: 2px; }
.seg button { flex: 1; background: var(--btn); color: #fff; }
.seg .on { background: var(--accent-btn); color: #1c1410; }

/* header */
.top { background: linear-gradient(#4c4c4c, #444); border-top: 1px solid #1e1e1e; height: 102px; padding: 0 8px; flex: none; }
.status { display: flex; align-items: center; height: 34px; color: #fff; }
.master { flex: none; width: 144px; }
.pre { width: 48px; height: 24px; margin: 0 14px 0 10px; }
.meters { flex: 1; display: grid; gap: 4px; }
.meters i { height: 8px; background: repeating-linear-gradient(90deg, #212121 0 2px, #2e2e2e 2px 4px); }
.clip { width: 20px; height: 20px; background: #757575; margin: 0 16px 0 2px; }
.midimap { width: 100px; height: 24px; margin-right: 16px; }
.led { width: 18px; height: 18px; border: 2px solid #111; margin-right: 4px; }
.green { background: #1f5c06; }
.red { background: #611f06; }
.time { margin-left: 16px; width: 114px; }
.cpu { width: 142px; }
.transport { display: flex; align-items: center; gap: 4px; height: 48px; margin-top: 9px; padding-top: 4px; color: #fff; }
.transport label, .transport .lab { padding: 0 6px 0 2px; }
.transport .lab.lpb { padding-left: 8px; }
.transport .lab.tight { padding-right: 3px; }
.big { display: flex; gap: 2px; padding: 2px; background: #202020; height: 48px; margin-top: -4px; width: 240px; }
.big button { flex: 1; background: var(--btn); }
.sep { width: 2px; height: 36px; background: #3b3b3b; margin: 0 16px; }
.big + .sep { height: 48px; }
.sq { width: 42px; height: 40px; }
.blk { width: 40px; }
.sync { flex: none; width: 156px; height: 40px; grid-template-columns: 1fr 39px; }
.after { margin-left: 4px; }
.presets { display: flex; gap: 4px; margin-left: auto; }
.transport .presets { margin-right: 2px; padding-top: 4px; }
.presets .btn { width: 28px; border-radius: 1px; font-size: 18px; align-items: end; line-height: 22px; padding-left: 4px; background: linear-gradient(#b0b0b0, #b0b0b0) 6px 4px / 10px 2px no-repeat, linear-gradient(#8a8a8a, #8a8a8a) 6px 9px / 3px 3px no-repeat, var(--btn); }

/* main frame */
main { flex: 1; display: flex; align-items: stretch; gap: 6px; padding-left: 2px; }
.center { flex: 1; min-width: 0; display: flex; flex-direction: column; }
.tabs { display: flex; align-items: flex-start; height: 57px; padding: 6px 5px 0; flex: none; }
.tab { gap: 8px; height: 48px; padding: 2px 18px 0 13px; background: linear-gradient(#3a3a3a, #353535); border: 2px solid #1d1d1d; border-bottom: 0; border-right-width: 0; border-radius: 6px 6px 0 0; color: var(--muted); }
.tab:nth-child(2), .tab:nth-child(5) { border-right-width: 2px; }
.tab.cur { height: 51px; padding: 0 20px 0 13px; background: #484848; color: #fff; }
.tab.cur svg { color: #e08254; }
.tab.first { margin-left: 18px; }
.filler { flex: 1; height: 42px; margin: 2px 14px 0; background: #414141; }
.tabs .btn { margin-top: 8px; }
.pair { display: flex; margin: 0 12px; }
.pair .btn { width: 108px; }
.panel { flex: 1; display: flex; flex-direction: column; gap: 10px; padding: 11px 11px 12px 10px; background: var(--panel); border-radius: 3px; }

/* scopes */
.scopes { display: grid; grid-template-columns: repeat(6, 1fr); padding: 1px 0; background: var(--well); border: 3px solid var(--edge); border-radius: 6px; }
.scopes div { height: 112px; display: flex; flex-direction: column; justify-content: space-between; padding: 4px 4px 2px 2px; border-left: 1px solid #3c3c3c; border-bottom: 1px solid #3c3c3c; background: linear-gradient(#d0d0d0, #d0d0d0) 0 56px / 100% 1px no-repeat; }
.scopes div:nth-child(6n+1) { border-left: 0; padding-left: 5px; }
.scopes div:nth-child(n+7) { border-bottom: 0; }
.scopes .cur { color: var(--accent); }
.scopes .mst { background-image: linear-gradient(#fff, #fff); }
.scopes .send { background-image: linear-gradient(#8e8e8e, #8e8e8e); }
.scopes .none { background: none; }

/* sequencer */
.editor { display: flex; gap: 8px; }
.sequencer { flex: none; width: 254px; position: relative; display: flex; align-items: flex-start; background: var(--well); border: 3px solid var(--edge); border-radius: 6px; }
.slots { padding: 21px 0 0 7px; display: grid; gap: 8px; width: 172px; }
.slot { width: 42px; height: 40px; margin-left: 96px; background: #623220; border: 2px solid #4a2719; border-radius: 5px; }
.now { display: flex; align-items: center; height: 54px; margin: -7px 0; padding: 0 7px 0 3px; border: 3px solid #989898; border-radius: 8px; width: 162px; }
.now .pos { width: 44px; height: 40px; border: 2px solid #666; border-top: 3px solid #ddd; border-radius: 4px; text-align: center; line-height: 36px; color: #999; }
.now .mat { width: 18px; height: 40px; margin: 0 7px 0 6px; background: #676767; border-radius: 3px; }
.now b { width: 42px; height: 40px; margin: 0 5px 0 5px; background: var(--accent); border-radius: 5px; text-align: center; line-height: 40px; font-weight: normal; color: #241208; }
.seqtools { padding-top: 163px; display: flex; flex-direction: column; align-items: center; width: 44px; margin-left: -2px; }
.seqtools > .stack { margin: 17px 0; }
.stack { display: grid; gap: 4px; }
.stack .btn { width: 30px; height: 30px; border: 0; font-size: 26px; line-height: 26px; }
.stack .btn:first-child { border-radius: 6px 6px 0 0; }
.stack .btn:last-child { border-radius: 0 0 6px 6px; }
.vert { flex-direction: column; gap: 4px; width: 26px; height: 74px; border: 0; }
.vert b { width: 14px; height: 20px; background: #ddd; color: #444; font: bold 16px/20px "DejaVu Sans Mono", monospace; }
.sequencer > .vert { margin: 8px 0 0 4px; }

/* pattern */
.right { flex: 1; min-width: 0; display: flex; flex-direction: column; gap: 10px; }
.pattern { position: relative; display: grid; grid-template: 1fr 32px / 56px 1fr 62px 30px; height: 708px; padding-top: 4px; background: var(--well); border: 4px solid #333; }
.lines { display: flex; flex-direction: column; justify-content: flex-end; padding: 0 10px 30px; font: 23px/24px "DejaVu Sans Mono", monospace; color: #8f8f8f; }
.lines.left { justify-content: space-between; padding: 0 5px 30px 3px; }
.nums { width: 42px; }
.left .nums { margin-left: 1px; }
.nums li { height: 25px; text-align: right; }
.nums .beat, .nums .here { background: #282828; color: #fff; }
.nums .here { height: 31px; line-height: 30px; }
.plen { height: 66px; margin-top: -1px; background: #282828; border: 2px solid #0d0d0d; border-radius: 4px; color: #fff; font: 20px/34px "DejaVu Sans", sans-serif; text-align: center; }
.plen .arr { display: flex; justify-content: center; gap: 12px; padding-top: 6px; }
.tracks { display: flex; border: 2px solid #333; overflow: hidden; min-width: 0; }
.track { position: relative; flex: none; padding: 0 10px; width: 228px; border-right: 4px solid #333; overflow: hidden; }
.t0 { width: 208px; }
.t0 > * { margin-left: -20px; }
.t0 > .thead { margin-left: 0; }
.t3, .t4 { width: 292px; }
.t5, .t6 { width: 194px; }
.t7 { width: 234px; flex: 1; border-right: 0; }
.bar { height: 16px; margin-top: 8px; border-radius: 4px; border: 1px solid #777; }
.tname { display: flex; align-items: center; height: 34px; padding-left: 3px; text-align: center; }
.tname span { flex: 1; margin-left: -4px; }
.tname .tl { height: 14px; background: #ddd; }
.tplay { display: flex; align-items: center; gap: 6px; height: 20px; padding-left: 21px; margin-bottom: 2px; }
.tplay span { flex: 1; text-align: center; color: #b8501f; font-size: 15px; }
.cols { display: flex; gap: 5px; height: 24px; }
.cols span { flex: none; width: 105px; padding-left: 4px; line-height: 24px; border: 1px solid #232323; }
.cols .wide { width: 140px; }
.cols .fx { width: 54px; background: #1c1c1c; }
.cols .fx:nth-last-child(2):not(:first-child) { width: 59px; }
.cplay { display: flex; align-items: center; gap: 17px; height: 22px; padding-left: 5px; }
.cplay .pix { font-size: 15px; }
.t0 .cplay svg { margin-left: -26px; }
.track table { border-collapse: collapse; table-layout: fixed; width: 0; color: #8f8f8f; font: 23px/24px "DejaVu Sans Mono", monospace; }
.track td { padding: 0; height: 25px; white-space: nowrap; line-height: 24px; vertical-align: top; }
.track tr.beat, .track tr.here { background: #282828; }
.track .here td { height: 31px; line-height: 30px; }
.track td span { display: inline-block; width: 29px; }
.track td i { display: inline-block; height: 2px; background: #5a5a5a; }
.beat td i, .here td i { background: #a0a0a0 !important; }
.track .d { width: 7px; margin: 0 4px 0 3px; vertical-align: 6px; -webkit-mask: repeating-linear-gradient(90deg, #000 0 1px, transparent 1px 2px); mask: repeating-linear-gradient(90deg, #000 0 1px, transparent 1px 2px); }
.track .set .d { background: currentColor !important; opacity: 0.5; margin-right: 3px; }
.track .m { width: 5px; margin: 0 4px 0 5px; vertical-align: 6px; }
.track .u { width: 5px; margin: 0 6px 0 3px; vertical-align: 0; }
.track .l { width: 6px; height: 3px; margin: 0 5px 0 3px; vertical-align: 5px; background: #41bdea; }
.track .v .u, .beat td.v .u { background: #8c8324 !important; }
.track .p .u, .beat td.p .u { background: #5a8a50 !important; }
.track .beat td .l { background: #3aa7cf !important; }
.track .here td .l { background: #fff !important; }
.track .here td .u { background: #b5b5b5 !important; }
.yellow { color: #d9d22b; }
.blue { color: #41bdea; }
.orange { color: #c05526; }
.lite { color: #e0e0e0; }
.beat .n, .beat .i { color: #fff; }
.beat .yellow { color: #c0ae2c; }
.beat .blue { color: #3aa7cf; }
.beat .orange { color: #9c4723; }
.here td { color: #fff; }
.cursor { background: linear-gradient(var(--accent), var(--accent)) 0 0 / 42px 100% no-repeat; }
.here td.cursor { color: #171717; }
.track.sel { width: 198px; margin-left: -4px; border-left: 4px solid #333; overflow: visible; z-index: 1; }
.sel .tname span { color: var(--accent); }
.k, .corner, .g { position: absolute; width: 20px; height: 20px; border: 0 solid var(--accent); pointer-events: none; }
.k1 { left: -4px; top: 0; border-width: 6px 0 0 6px; }
.k2 { right: -4px; top: 0; border-width: 6px 6px 0 0; }
.k3 { left: -4px; bottom: 0; border-width: 0 0 6px 6px; }
.k4 { right: -4px; bottom: 0; border-width: 0 6px 6px 0; }
.corner { width: 48px; height: 48px; }
.c1 { left: -4px; top: -4px; border-width: 6px 0 0 6px; }
.c2 { right: -4px; top: -4px; border-width: 6px 6px 0 0; }
.c3 { left: -4px; bottom: -4px; border-width: 0 0 6px 6px; }
.c4 { right: -4px; bottom: -4px; border-width: 0 6px 6px 0; }
.vscroll { margin-top: -1px; }
.vscroll i { width: 26px; height: 22px; margin-top: 14px; background: #4f4f4f; border-radius: 3px; }
.hscroll { grid-column: 1 / -1; padding: 3px 92px 3px 75px; }
.hscroll i { width: 85%; height: 26px; background: #4f4f4f; border-radius: 2px; }

/* pattern toolbar */
.tools { display: flex; align-items: center; gap: 4px; height: 38px; padding-left: 2px; }
.tools .sep { margin: 0 8px; }
.tools .btn { height: 36px; }
.quant { font-size: 24px; }
.drop { border-radius: 1px; }
.col { width: 44px; }
.dg { margin-right: 4px; }
.fxchip { width: 26px; height: 24px; background: #999; color: #555; border-radius: 4px; text-align: center; line-height: 24px; margin: 0 2px; }

/* dsp chain */
.dsp { display: flex; gap: 14px; }
.tree { flex: none; width: 398px; height: 287px; background: var(--well); border: 3px solid var(--edge); border-radius: 6px; padding: 8px 6px 0 7px; }
.find { display: flex; align-items: center; height: 26px; }
.find .btn { height: 26px; border: 0; border-radius: 0; width: 70px; }
.find .clear { width: 26px; }
.find input { flex: 1; padding-left: 7px; font-style: italic; }
.find input::placeholder { color: #858585; }
.treebody { display: flex; border-top: 2px solid var(--edge); margin-top: 2px; padding-top: 3px; }
.thumb { width: 26px; height: 24px; background: #4f4f4f; border-radius: 3px; }
.tree ul { flex: 1; }
.tree li { display: flex; align-items: center; justify-content: space-between; padding: 0 12px 0 56px; }
.tree li svg { color: #555; }
.tree .l0, .tree .l1 { font-weight: bold; justify-content: flex-start; gap: 6px; padding-left: 1px; }
.tree .l1 { padding-left: 19px; }
.chainwrap { flex: 1; min-width: 0; }
.chain { display: flex; gap: 16px; overflow: hidden; }
.device { position: relative; flex: none; width: 620px; height: 247px; padding: 8px 8px 0 9px; background: #303030; border: 2px solid #232323; border-radius: 8px; }
.chainbar { height: 28px; width: 1102px; max-width: 100%; margin-top: 11px; background: #4e4e4e; border: 2px solid #1c1c1c; border-radius: 4px; }
.param { display: flex; align-items: center; height: 32px; margin-bottom: 4px; color: var(--muted); }
.param:first-child { margin-bottom: 12px; }
.param > label { width: 118px; padding-left: 2px; flex: none; }
.param span { white-space: nowrap; }
.mixer .seg { width: 236px; }
.mixer .seg button { padding-right: 2px; }
.mixer .seg button:first-child { flex: none; width: 76px; }
.param > .dl { margin-left: 79px; width: 72px; }
.param > .dl + .num { flex: 1; }
.swatch { width: 50px; height: 32px; background: #5073b3; border: 2px solid #4a62a0; border-radius: 3px; }
.plain { color: #fff; padding-left: 9px; }
.num.route { flex: 1; }
.route .pick { border: 0; height: 28px; margin-left: 13px; border-radius: 0; }
.num.arrows { width: 50px; margin-right: 11px; padding-left: 8px; }
.num.arrows .tr { margin-left: 10px; }
.mixer .range { flex: none; width: 261px; }
.lamp { width: 20px; height: 20px; margin: 0 10px 0 12px; background: #2e2e2e; border: 2px solid #272727; border-radius: 4px; }
.lamp.lit { background: #eee; border-color: #aaa; display: grid; place-items: center; }
.lit::after { content: ""; width: 7px; height: 7px; border: 2px solid #222; border-width: 2px 0 0 2px; transform: rotate(45deg); margin-top: 4px; }
.delay { width: 820px; display: flex; padding: 8px 8px 0 8px; }
.dmain { flex: none; width: 605px; }
.dmain .range { flex: none; width: 263px; }
.dmain .arrows { margin-right: 10px; }
.dhead { display: flex; align-items: center; height: 32px; margin-bottom: 12px; gap: 2px; color: #fff; }
.dhead .btn i { background: #fff; }
.dhead .btn.off i { background: #888; }
.dhead b { margin: 0 16px; }
.ab { display: flex; flex: none; gap: 2px; height: 24px; width: 50px; padding: 1px; background: #202020; margin-right: 2px; }
.ab button { flex: 1; background: #505050; color: #888; font-size: 16px; }
.nav { width: 44px; margin-right: 2px; }
.nav i { background: #fff; width: 8px; }
.nav.off i { background: #888; }
.preset { color: var(--muted); }
.dside { flex: none; margin-top: 3px; width: 197px; height: 227px; padding: 3px 8px 0 5px; background: #353535; color: var(--muted); }
.drow { display: flex; align-items: center; height: 32px; margin-bottom: 4px; }
.drow .lamp { margin-left: 8px; }
.drow .num { flex: 1; margin-right: 3px; }
.drow .set { width: 56px; }
.gap { margin-top: 8px; margin-bottom: 0; }
.cap { display: block; padding-left: 2px; white-space: nowrap; }
.prow { display: flex; align-items: center; height: 22px; padding: 0 2px 0 5px; }
.prow .lamp { margin-right: 0; }
.filter { width: 820px; padding-left: 8px; }
.types { width: 330px; }
.g { width: 36px; height: 36px; border-color: #666; left: -2px; }
.g1 { top: -2px; border-width: 6px 0 0 6px; }
.g2 { bottom: -2px; border-width: 0 0 6px 6px; }

/* instrument side */
.side { flex: none; width: 502px; margin-top: 5px; display: flex; flex-direction: column; background: var(--panel); border-radius: 3px; padding: 12px 11px 11px; }
.instr { position: relative; display: flex; gap: 6px; height: 294px; padding: 0; background: var(--well); border: 3px solid var(--edge); border-radius: 6px; flex: none; }
.mark { position: absolute; left: 143px; top: 48px; }
.ibtns { display: flex; flex-direction: column; justify-content: space-between; padding: 1px 0 2px 1px; }
.ibtns .stack { gap: 2px; }
.move { width: 30px; height: 30px; border: 0; }
#instruments { position: relative; flex: 1; background: linear-gradient(#888, #888) 34px 3px / 1px 280px no-repeat; }
#instruments li { display: flex; align-items: center; height: 26px; padding: 0 7px 0 6px; }
#instruments .no { width: 35px; font: 20px/26px "DejaVu Sans Mono", monospace; }
#instruments i { width: 18px; height: 18px; background: #333; margin-right: 5px; }
#instruments svg { margin-left: auto; color: #bbb; }
#instruments .cur { background: rgba(255, 255, 255, 0.35); color: #fff; border-radius: 4px; margin-right: 3px; padding-right: 4px; }
.row { display: flex; align-items: center; gap: 4px; padding: 0 2px; flex: none; }
.head { margin: 10px 0 12px; }
.plug .pick { flex: 1; }
.editorbtn { width: 68px; background: #424242; color: #8a8a8a; }
.macros { display: grid; grid-template-columns: repeat(4, 120px); row-gap: 14px; padding: 16px 0 0 2px; color: var(--muted); }
.macros div { display: flex; flex-direction: column; height: 42px; }
.macros .range { flex: none; width: 110px; margin-left: 2px; }
.macros label { padding-left: 3px; margin-top: 2px; }
.phr { margin: 16px 0 11px; gap: 7px; }
.phrase { flex: 1; display: flex; height: 42px; border: 2px solid #363636; border-radius: 6px; background: #1c1c1c; color: #6f6f6f; overflow: hidden; }
.phrase button { width: 32px; background: #404040; }
.phrase i { background: #888; }
.phrase span { flex: 1; text-align: center; line-height: 38px; white-space: nowrap; }
.modes { width: 214px; height: 40px; }
.modes button:first-child { flex: none; width: 64px; }
.modes .on { flex: none; width: 68px; }
.cats { margin: 12px 2px; }
.path { margin-bottom: 8px; color: var(--muted); }
.path span { flex: 1; white-space: nowrap; }
.browser { flex: 1; display: flex; gap: 3px; margin: 11px 0 9px; padding: 3px 0; background: var(--well); border: 3px solid var(--edge); border-radius: 6px; }
.bbtns { display: grid; align-content: start; gap: 6px; padding-left: 4px; }
.bbtns .btn { width: 30px; height: 30px; border: 0; }
.fw { --back: #eee; --front: #bbb; }
.fo { --back: #b54d20; --front: #7d3a1e; }
.browser ul { flex: 1; }
.browser li { display: flex; align-items: center; height: 26px; padding-left: 4px; white-space: nowrap; }
.browser li svg + svg { margin: 0 13px 0 9px; }
.browser .parent { height: 23px; padding-left: 6px; gap: 10px; }
.browser .cur { background: #646464; color: #fff; border-radius: 3px; margin-right: 3px; }
.save input { flex: 1; height: 36px; padding-left: 2px; background: var(--well); border: 2px solid var(--edge); border-radius: 6px; margin-left: -2px; }
.save .btn { width: 88px; }

/* far right strip */
.strip { flex: none; width: 51px; display: flex; flex-direction: column; }
.striptop { display: grid; gap: 10px; height: 96px; padding: 14px 0 0 10px; align-content: start; }
.striptop .btn { width: 30px; height: 31px; }
.striptop .tr { background: #111; }
.stripbody { flex: 1; background: var(--panel); padding: 500px 0 0 9px; display: flex; flex-direction: column; gap: 4px; border-radius: 3px 0 0 3px; }
.dim.presets { flex-direction: column; margin: 0; }
.dim.presets .btn { width: 32px; color: #999; }
.line { height: 2px; margin: 8px 10px 8px 0; background: #333; }

/* footer */
footer { display: flex; flex: none; height: 55px; padding-top: 5px; border-bottom: 7px solid #1b190f; }
.fbtns { width: 280px; padding: 7px 0 0 6px; display: flex; }
.fbtns .pair { margin: 0 0 0 12px; }
.fbar { flex: 1; display: flex; justify-content: flex-end; align-items: center; background: linear-gradient(#4a4a4a, #3c3c3c); padding-right: 48px; }
.brand { font: bold 46px/42px "DejaVu Sans", sans-serif; color: #8f8f8f; margin-top: -6px; }
```
